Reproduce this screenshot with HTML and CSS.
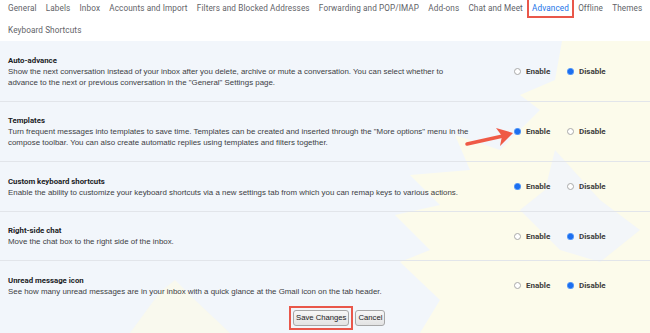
FILE: index.html
```html
<!DOCTYPE html>
<html lang="en">
<head>
    <meta charset="UTF-8">
    <title>Settings - Advanced</title>
    <link rel="stylesheet" href="styles.css">
</head>
<body>
    <div class="settings-page">
        <svg class="backdrop" width="650" height="292" viewBox="0 41 650 292" aria-hidden="true">
            <polygon fill="#fcfbeb" points="562,41 650,41 650,333 420,333 440,300 400,262 430,250 395,215 440,205 410,175 470,170 455,135 500,150 540,110 520,95 555,80"/>
            <polygon fill="#f3f6f9" points="555,150 600,200 640,230 600,262 560,250 520,210 545,190"/>
            <polygon fill="#f9f9ee" points="130,333 160,292 175,280 195,300 230,333"/>
        </svg>

        <nav class="tabs">
            <div class="tab-row">
                <a class="tab">General</a>
                <a class="tab">Labels</a>
                <a class="tab">Inbox</a>
                <a class="tab">Accounts and Import</a>
                <a class="tab">Filters and Blocked Addresses</a>
                <a class="tab">Forwarding and POP/IMAP</a>
                <a class="tab">Add-ons</a>
                <a class="tab">Chat and Meet</a>
                <a class="tab active">Advanced</a>
                <a class="tab">Offline</a>
                <a class="tab">Themes</a>
            </div>
            <div class="tab-row">
                <a class="tab">Keyboard Shortcuts</a>
            </div>
        </nav>

        <div class="settings-list">
            <div class="setting">
                <div class="setting-text">
                    <div class="setting-title">Auto-advance</div>
                    <div class="setting-desc">Show the next conversation instead of your inbox after you delete, archive or mute a conversation. You can select whether to advance to the next or previous conversation in the "General" Settings page.</div>
                </div>
                <div class="options">
                    <label class="option"><span class="radio"></span>Enable</label>
                    <label class="option"><span class="radio checked"></span>Disable</label>
                </div>
            </div>

            <div class="setting">
                <div class="setting-text">
                    <div class="setting-title">Templates</div>
                    <div class="setting-desc">Turn frequent messages into templates to save time. Templates can be created and inserted through the "More options" menu in the compose toolbar. You can also create automatic replies using templates and filters together.</div>
                </div>
                <div class="options">
                    <label class="option"><span class="radio checked"></span>Enable</label>
                    <label class="option"><span class="radio"></span>Disable</label>
                </div>
                <svg class="arrow" width="60" height="24" viewBox="0 0 60 24" aria-hidden="true">
                    <line x1="4" y1="19" x2="40" y2="11" stroke="#ef5a46" stroke-width="3.5" stroke-linecap="round"/>
                    <polygon fill="#ef5a46" points="50,8 33,3 39,11 37,21"/>
                </svg>
            </div>

            <div class="setting">
                <div class="setting-text">
                    <div class="setting-title">Custom keyboard shortcuts</div>
                    <div class="setting-desc">Enable the ability to customize your keyboard shortcuts via a new settings tab from which you can remap keys to various actions.</div>
                </div>
                <div class="options">
                    <label class="option"><span class="radio checked"></span>Enable</label>
                    <label class="option"><span class="radio"></span>Disable</label>
                </div>
            </div>

            <div class="setting">
                <div class="setting-text">
                    <div class="setting-title">Right-side chat</div>
                    <div class="setting-desc">Move the chat box to the right side of the inbox.</div>
                </div>
                <div class="options">
                    <label class="option"><span class="radio"></span>Enable</label>
                    <label class="option"><span class="radio checked"></span>Disable</label>
                </div>
            </div>

            <div class="setting last">
                <div class="setting-text">
                    <div class="setting-title">Unread message icon</div>
                    <div class="setting-desc">See how many unread messages are in your inbox with a quick glance at the Gmail icon on the tab header.</div>
                </div>
                <div class="options">
                    <label class="option"><span class="radio"></span>Enable</label>
                    <label class="option"><span class="radio checked"></span>Disable</label>
                </div>
            </div>
        </div>

        <div class="actions">
            <span class="highlight"><button class="btn">Save Changes</button></span>
            <button class="btn">Cancel</button>
        </div>
    </div>
</body>
</html>
```

FILE: styles.css
```css
* {
    margin: 0;
    padding: 0;
    box-sizing: border-box;
}

body {
    width: 650px;
    height: 333px;
    overflow: hidden;
    font-family: Roboto, "Liberation Sans", sans-serif;
    background: #f2f6fb;
}

.settings-page {
    position: relative;
    height: 333px;
}

.backdrop {
    position: absolute;
    left: 0;
    top: 41px;
}

.tabs {
    position: relative;
    background: #fff;
    height: 41px;
    padding: 0 8px;
}

.tab-row {
    display: flex;
    gap: 9.2px;
    height: 15px;
    align-items: center;
}

.tab-row + .tab-row {
    margin-top: 7.5px;
}

.tab {
    font-size: 8.2px;
    color: #5f6368;
    white-space: nowrap;
    letter-spacing: 0.1px;
}

.tab.active {
    color: #1a73e8;
    outline: 2px solid #e9574a;
    outline-offset: 3px;
}

.settings-list {
    position: relative;
}

.setting {
    position: relative;
    display: flex;
    align-items: center;
    padding: 13.5px 0 13px 8px;
    border-bottom: 1px solid #e2e5ea;
}

.setting.last {
    border-bottom: none;
    padding-bottom: 0;
}

.setting-text {
    width: 462px;
}

.setting-title {
    font-size: 7.8px;
    font-weight: bold;
    color: #202124;
    line-height: 11px;
}

.setting-desc {
    font-family: "Liberation Sans", Arial, sans-serif;
    font-size: 7.9px;
    color: #3c4043;
    line-height: 11px;
}

.options {
    display: flex;
    margin-left: 44px;
}

.option {
    display: flex;
    align-items: center;
    width: 53px;
    font-size: 8px;
    font-weight: bold;
    color: #3c3c3c;
}

.radio {
    width: 7px;
    height: 7px;
    border-radius: 50%;
    border: 1px solid #a9a9a9;
    background: #fff;
    margin-right: 5px;
    flex-shrink: 0;
}

.radio.checked {
    border: none;
    background: radial-gradient(circle, #1d6ff0 0 2.4px, #4b92f7 2.6px 3.5px);
}

.arrow {
    position: absolute;
    left: 463px;
    top: 23px;
}

.actions {
    position: relative;
    display: flex;
    align-items: center;
    gap: 6px;
    padding: 13px 0 0 293px;
}

.highlight {
    outline: 2px solid #e9574a;
    outline-offset: 2px;
    display: flex;
}

.btn {
    font-family: "Liberation Sans", Arial, sans-serif;
    font-size: 7.7px;
    color: #222;
    height: 16px;
    padding: 0 2px;
    border: 1px solid #a7a7a7;
    border-radius: 3px;
    background: linear-gradient(#f7f7f7, #e3e3e3);
}
```
